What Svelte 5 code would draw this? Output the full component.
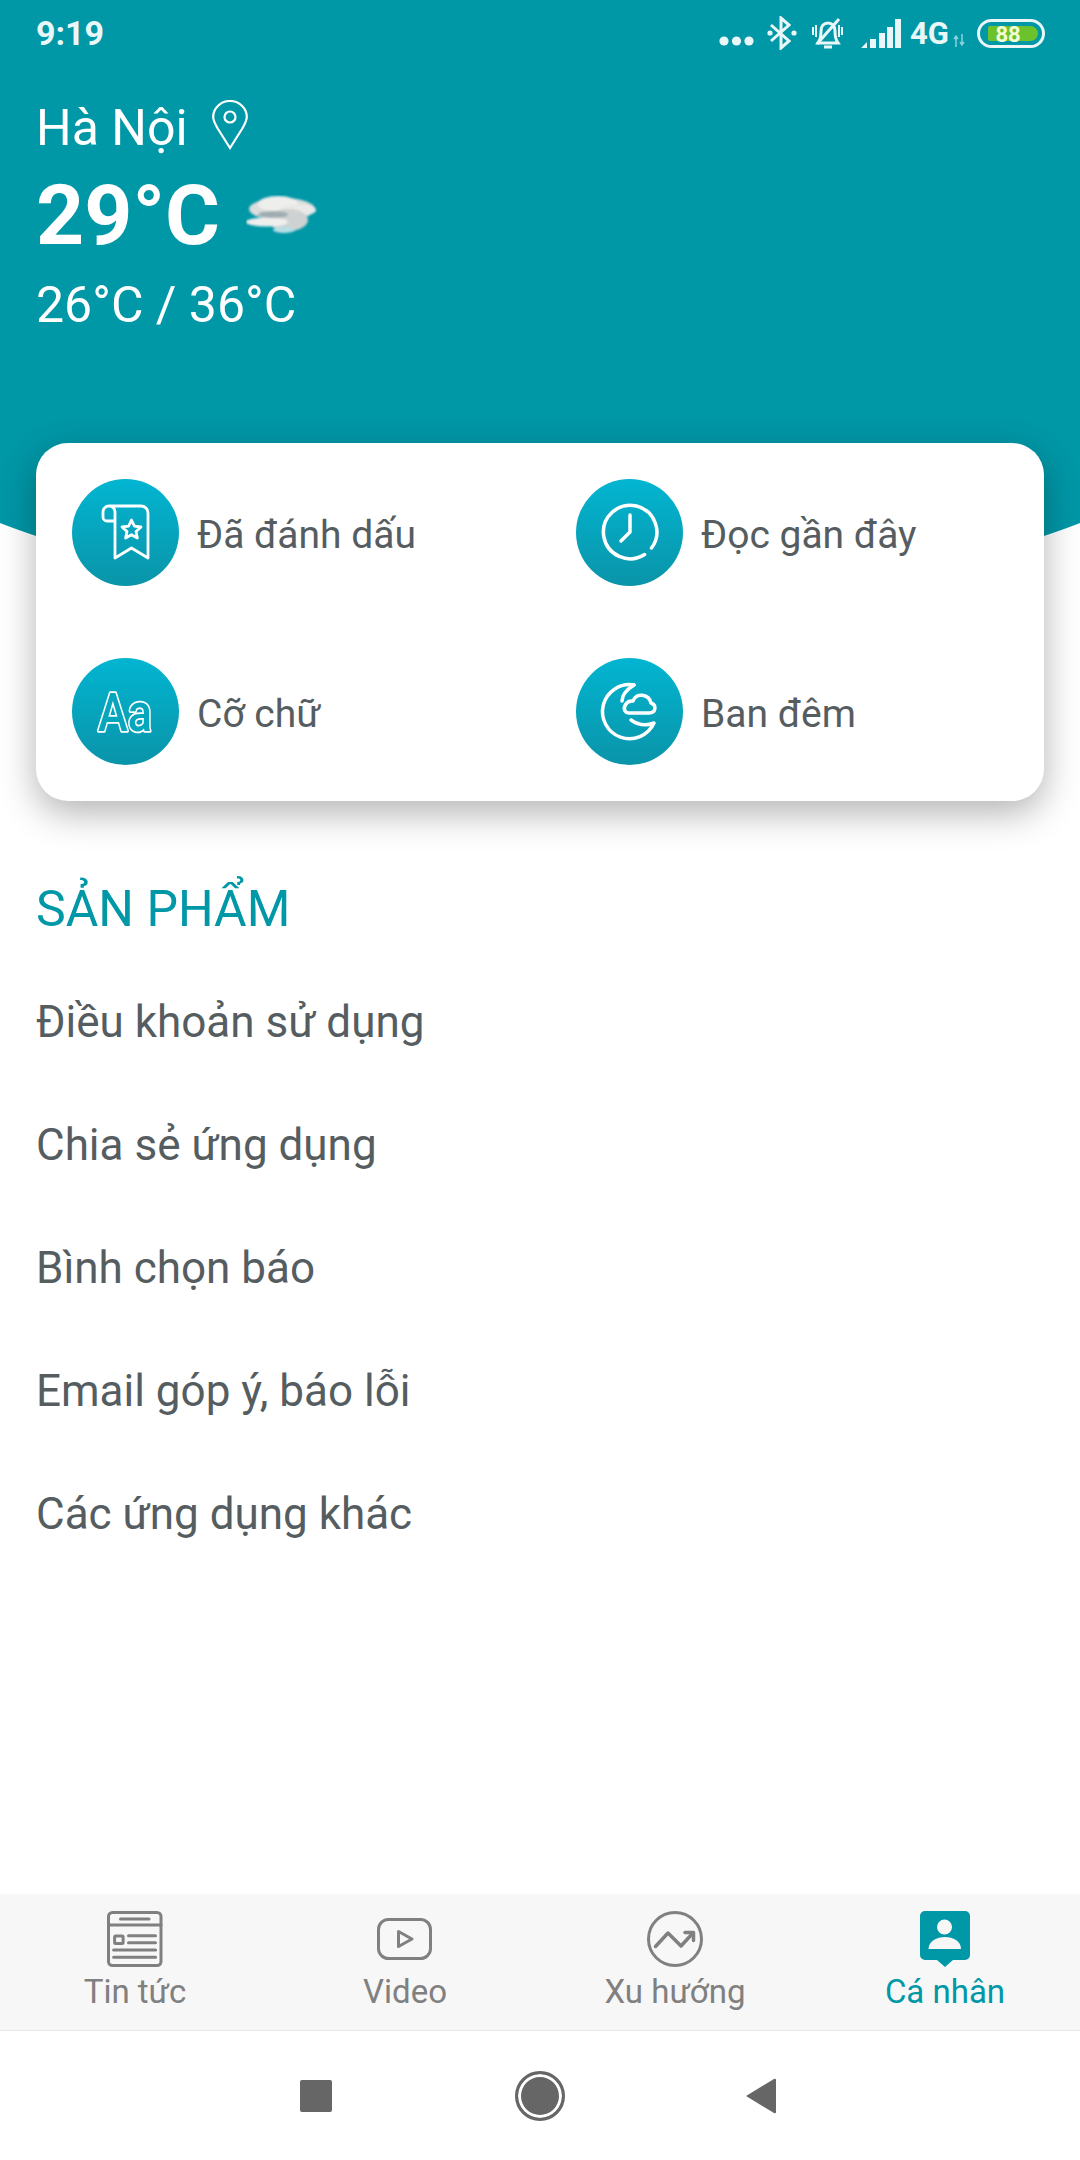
<script>
    const actions = [
        { label: "Đã đánh dấu", icon: "bookmark" },
        { label: "Đọc gần đây", icon: "clock" },
        { label: "Cỡ chữ", icon: "font" },
        { label: "Ban đêm", icon: "moon" }
    ];
    const links = [
        "Điều khoản sử dụng",
        "Chia sẻ ứng dụng",
        "Bình chọn báo",
        "Email góp ý, báo lỗi",
        "Các ứng dụng khác"
    ];
    const tabs = [
        { label: "Tin tức", icon: "news" },
        { label: "Video", icon: "video" },
        { label: "Xu hướng", icon: "trend" },
        { label: "Cá nhân", icon: "person", active: true }
    ];
</script>

<div class="page">
    <header class="hero">
        <div class="status">
            <span class="time">9:19</span>
            <div class="status-icons">
                <svg class="dots" width="35" height="10" viewBox="0 0 35 10"><circle cx="5" cy="5" r="4.6" /><circle cx="17.5" cy="5" r="4.6" /><circle cx="30" cy="5" r="4.6" /></svg>
                <svg class="bt" width="30" height="34" viewBox="0 0 30 34"><path d="M4 9 L22 25 L14 32 V2 L22 9 L4 25" /><circle cx="3" cy="17" r="2.6" class="solid" /><circle cx="27" cy="17" r="2.6" class="solid" /></svg>
                <svg class="bell" width="35" height="33" viewBox="0 0 35 33"><path d="M8 26 C11 22 11 18 11 14 C11 9 14 6 18 6 C22 6 25 9 25 14 C25 18 25 22 28 26 Z" /><path d="M14 30 H22" /><path d="M7 27 L29 2" /><path d="M3 10 V18 M32 10 V18 M6 8 V20 M29 8 V20" class="thin" /></svg>
                <svg class="signal" width="40" height="29" viewBox="0 0 40 29"><path d="M0 29 L6 23 V29 Z M9 20 h6 v9 h-6 Z M18 14 h6 v15 h-6 Z M26 8 h6 v21 h-6 Z M34 0 h6 v29 h-6 Z" class="solid" /></svg>
                <span class="net">4G</span>
                <svg class="arrows" width="12" height="13" viewBox="0 0 12 13"><path d="M3 13 V2 M1 5 L3 2 L5 5 M9 0 V11 M7 8 L9 11 L11 8" /></svg>
                <div class="battery"><span class="level">88</span></div>
            </div>
        </div>
        <div class="city">
            <span>Hà Nội</span>
            <svg width="36" height="50" viewBox="0 0 36 50"><path d="M18 48 L6 29 C3 24 1.200 20.500 1.200 17 A16.800 16 0 0 1 34.800 17 C34.800 20.500 33 24 30 29 Z" /><circle cx="18" cy="17" r="5.500" /></svg>
        </div>
        <div class="temp">
            <span>29°C</span>
            <svg width="72" height="40" viewBox="0 0 72 40">
                <defs>
                    <filter id="soft" x="-20%" y="-40%" width="140%" height="180%"><feGaussianBlur stdDeviation="0.8" /></filter>
                </defs>
                <g filter="url(#soft)">
                    <ellipse cx="36" cy="14" rx="33" ry="11" fill="#dcdedd" />
                    <ellipse cx="32" cy="9" rx="20" ry="8" fill="#eeeeec" />
                    <ellipse cx="52" cy="15" rx="18" ry="6" fill="#e9e9e8" />
                    <ellipse cx="42" cy="25" rx="20" ry="11" fill="#cfd2d2" />
                    <ellipse cx="21" cy="27" rx="21" ry="4.500" fill="#efefee" />
                    <ellipse cx="27" cy="19.500" rx="15" ry="3.500" fill="#9fadb0" />
                    <ellipse cx="38" cy="35" rx="11" ry="3" fill="#b6dfe5" />
                </g>
            </svg>
        </div>
        <div class="range">26°C / 36°C</div>
    </header>

    <section class="card">
        {#each actions as action}
            <div class="action">
                <span class="badge">
                    <svg width="107" height="107" viewBox="0 0 107 107">
                        {#if action.icon === "bookmark"}
                            <path d="M37 27 H69 a7 7 0 0 1 7 7 V79 L59.500 69 L43 79 V33 a6 6 0 0 0 -6 -6 a6 6 0 0 0 -6 6 V38 a4 4 0 0 0 4 4 H43" />
                            <path d="M59.500 41 L62.400 47.200 L69 48 L64 52.500 L65.400 59 L59.500 55.700 L53.600 59 L55 52.500 L50 48 L56.600 47.200 Z" />
                        {:else if action.icon === "clock"}
                            <path class="thick" d="M68.500 75.500 A26.700 26.700 0 1 1 75.500 69" />
                            <path class="thick" d="M54 36 V53 L45 62" />
                        {:else if action.icon === "font"}
                            <text class="aa" x="26" y="73" textLength="54" lengthAdjust="spacingAndGlyphs">Aa</text>
                        {:else}
                            <path class="thick" d="M58 27 A27 27 0 1 0 78 65 C70 68 62 67 55 62" />
                            <path class="thick" d="M58 27 C50 32 46 38 46 43" />
                            <path class="thick" d="M53 55 H73 C80 55 81 47 75 45 C73 36 60 34 57 43 C50 42 47 50 49 53 C50 54.500 51 55 53 55 Z" />
                        {/if}
                    </svg>
                </span>
                <span class="action-label">{action.label}</span>
            </div>
        {/each}
    </section>

    <main class="products">
        <h2>SẢN PHẨM</h2>
        {#each links as link}
            <div class="link">{link}</div>
        {/each}
    </main>

    <nav class="tabs">
        {#each tabs as tab}
            <div class="tab" class:active={tab.active}>
                <svg width="60" height="60" viewBox="0 0 60 60">
                    {#if tab.icon === "news"}
                        <rect x="3.500" y="3.500" width="52.500" height="53" rx="4" />
                        <path d="M3.500 16 H56 M15.500 10 H44 M23.500 26.700 H50.500 M23.500 33.700 H50.500 M8.600 41 H50.600 M8.600 48.300 H50.600" />
                        <rect x="9.600" y="27" width="8.500" height="7.500" rx="1" />
                    {:else if tab.icon === "video"}
                        <rect x="3.500" y="10.500" width="52" height="39" rx="10" />
                        <path d="M23.500 22.500 L37 30 L23.500 37.500 Z" />
                    {:else if tab.icon === "trend"}
                        <circle cx="30" cy="30" r="26.500" />
                        <path class="bold" d="M10.500 37.500 L23 24 L36 37 L48 24" />
                        <path class="bold" d="M40 23.500 H48.500 V31.500" />
                    {:else}
                        <path class="fill" d="M10 2 H50 a5 5 0 0 1 5 5 V46 a5 5 0 0 1 -5 5 H38 L30 58 L22 51 H10 a5 5 0 0 1 -5 -5 V7 a5 5 0 0 1 5 -5 Z" />
                        <circle class="cut" cx="29.500" cy="18" r="7.500" />
                        <path class="cut" d="M13.500 40 C13.500 32 22 28 30 28 C38 28 46 32 46 40 Z" />
                    {/if}
                </svg>
                <span>{tab.label}</span>
            </div>
        {/each}
    </nav>

    <footer class="navbar">
        <span class="square"></span>
        <span class="home"></span>
        <svg width="32" height="36" viewBox="0 0 32 36"><path d="M1 18 L29 1 Q31 0 31 2 V34 Q31 36 29 35 Z" fill="#666" /></svg>
    </footer>
</div>

<style>
    :global(body) {
        margin: 0;
        background: #fff;
    }

    .page {
        display: flex;
        flex-direction: column;
        height: 2160px;
        font-family: Roboto, "Noto Sans", sans-serif;
        overflow: hidden;
    }

    .hero {
        height: 605px;
        margin-bottom: -162px;
        padding: 0 35px 0 36px;
        box-sizing: border-box;
        color: #fff;
        background:
            radial-gradient(ellipse 700px 224px at 50% 381px, #0097a7 99.7%, transparent 100%),
            linear-gradient(#0097a7, #0097a7) 0 0 / 100% 381px no-repeat;
    }

    .status {
        display: flex;
        justify-content: space-between;
        align-items: center;
        height: 66px;
    }

    .time {
        font-size: 34px;
        font-weight: 700;
        color: #eaf7f8;
    }

    .status-icons {
        display: flex;
        align-items: center;
    }

    .status-icons svg {
        fill: none;
        stroke: #eaf7f8;
        stroke-width: 3;
    }

    .status-icons .dots {
        fill: #eaf7f8;
        stroke: none;
        margin: 16px 0 0 0;
    }

    .status-icons .solid {
        fill: #eaf7f8;
        stroke: none;
    }

    .status-icons .thin {
        stroke-width: 2;
    }

    .bt {
        margin-left: 13px;
    }

    .bell {
        margin-left: 13px;
    }

    .signal {
        margin-left: 16px;
    }

    .net {
        margin-left: 9px;
        font-size: 31px;
        font-weight: 700;
        color: #eaf7f8;
    }

    .status-icons .arrows {
        margin: 14px 0 0 4px;
        stroke-width: 1.500;
        opacity: 0.6;
    }

    .battery {
        display: flex;
        box-sizing: border-box;
        width: 68px;
        height: 29px;
        margin-left: 12px;
        padding: 4px 4px 4px 8px;
        border: 3px solid #eaf7f8;
        border-radius: 15px;
    }

    .level {
        flex: 1;
        padding-right: 10px;
        border-radius: 2px 9px 9px 2px;
        background: #6cc22a;
        color: #f3ffd8;
        font-size: 22px;
        font-weight: 700;
        line-height: 17px;
        text-align: center;
    }

    .city {
        display: flex;
        align-items: center;
        gap: 24px;
        height: 60px;
        margin-top: 32px;
        font-size: 50px;
    }

    .city svg {
        margin-top: -6px;
        fill: none;
        stroke: #fff;
        stroke-width: 2.200;
    }

    .temp {
        display: flex;
        align-items: center;
        gap: 26px;
        height: 96px;
        margin-top: 9px;
        font-size: 84px;
        font-weight: 700;
    }

    .range {
        margin-top: 14px;
        font-size: 50px;
        line-height: 56px;
    }

    .card {
        position: relative;
        display: grid;
        grid-template-columns: 504px 504px;
        row-gap: 72px;
        margin: 0 36px;
        padding: 36px 0 36px 36px;
        width: 1008px;
        box-sizing: border-box;
        border-radius: 32px;
        background: #fff;
        box-shadow: 0 12px 36px rgba(0, 0, 0, 0.3);
    }

    .action {
        display: flex;
        align-items: center;
        gap: 18px;
        height: 107px;
    }

    .badge {
        display: block;
        width: 107px;
        height: 107px;
        border-radius: 50%;
        background: linear-gradient(#02b5d1, #0a94a9);
    }

    .badge svg {
        display: block;
        fill: none;
        stroke: #fff;
        stroke-width: 2.800;
        stroke-linejoin: round;
        stroke-linecap: round;
    }

    .badge .thick {
        stroke-width: 3.500;
    }

    .badge .aa {
        font-family: Roboto, sans-serif;
        font-size: 54px;
        font-weight: 500;
        fill: #06a6bd;
        stroke-width: 3.600;
        paint-order: stroke fill;
    }

    .action-label {
        padding-top: 5px;
        font-size: 39px;
        color: #555d61;
    }

    .products {
        flex: 1;
        padding: 80px 36px 0;
    }

    .products h2 {
        margin: 0 0 24px;
        font-size: 50px;
        line-height: 56px;
        font-weight: 400;
        color: #0097a7;
    }

    .link {
        height: 123px;
        line-height: 123px;
        font-size: 44px;
        color: #555d61;
    }

    .tabs {
        display: grid;
        grid-template-columns: repeat(4, 1fr);
        height: 137px;
        box-sizing: border-box;
        background: #f7f7f7;
        border-bottom: 1px solid #e6e6e6;
    }

    .tab {
        display: flex;
        flex-direction: column;
        align-items: center;
        padding-top: 15px;
        font-size: 33px;
        line-height: 40px;
        color: #808080;
    }

    .tab.active {
        color: #0097a7;
    }

    .tab svg {
        display: block;
        flex: none;
        fill: none;
        stroke: #808080;
        stroke-width: 3;
        stroke-linejoin: round;
        stroke-linecap: round;
        margin-bottom: 3px;
    }

    .tab .bold {
        stroke-width: 3.500;
    }

    .tab .fill {
        fill: #0097a7;
        stroke: none;
    }

    .tab .cut {
        fill: #f7f7f7;
        stroke: none;
    }

    .navbar {
        display: flex;
        align-items: center;
        height: 129px;
        padding-left: 300px;
        background: #fff;
    }

    .square {
        width: 32px;
        height: 32px;
        border-radius: 2px;
        background: #666;
    }

    .home {
        box-sizing: border-box;
        width: 50px;
        height: 50px;
        margin: 0 180px 0 183px;
        border: 3px solid #666;
        border-radius: 50%;
        background: #666;
        box-shadow: inset 0 0 0 3px #fff;
    }
</style>
